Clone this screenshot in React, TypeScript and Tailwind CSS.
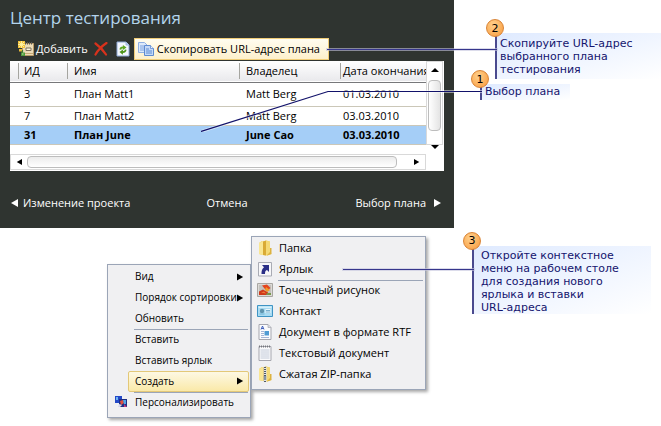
import type { ReactNode } from 'react';
import { clsx } from 'clsx';

const plans = [
  { id: 3, name: 'План Matt1', owner: 'Matt Berg', end: '01.03.2010' },
  { id: 7, name: 'План Matt2', owner: 'Matt Berg', end: '03.03.2010' },
  { id: 31, name: 'План June', owner: 'June Cao', end: '03.03.2010', selected: true },
];

type MenuEntry = {
  label: string;
  icon?: ReactNode;
  arrow?: boolean;
  separator?: boolean;
  active?: boolean;
};

function Triangle({ dir, className }: { dir: 'left' | 'right' | 'up' | 'down'; className?: string }) {
  const points = {
    left: '8,0 8,8 1,4',
    right: '0,0 0,8 7,4',
    up: '0,6 8,6 4,2',
    down: '0,2 8,2 4,6',
  }[dir];
  return (
    <svg viewBox="0 0 8 8" className={clsx('shrink-0 fill-current', className)} aria-hidden="true">
      <polygon points={points} />
    </svg>
  );
}

function AddIcon() {
  return (
    <svg viewBox="0 0 16 16" className="size-4 shrink-0" aria-hidden="true">
      <path d="M4.500 2.500H15.500V14.500H4.500z" fill="#ecdcb8" stroke="#b99a68" />
      <path d="M6 12.500h9" stroke="#c8ab77" />
      <path d="M7.500 1v2.500M9.500 1v2.500M11.500 1v2.500M13.500 1v2.500" stroke="#555" strokeWidth="1" />
      <path d="M8 7h5v2.500H8z" fill="#fdf6e2" stroke="#6e6250" strokeWidth=".9" />
      <path d="M0 0h7v7H0z" fill="#f3c33c" />
      <path d="M3.500 0v7M0 3.500h7M1 1l5 5M6 1L1 6" stroke="#fff3a8" strokeWidth=".9" />
      <path d="M1 8h3v2.500H1z" fill="#e9b93b" />
      <path d="M4.500 9v3.500" stroke="#3f7d31" strokeWidth="1.200" />
      <path d="M3 11.500h4v3.500H3z" fill="#4f9a3c" />
      <path d="M4 12.500h1.500v1H4z" fill="#bfe3a6" />
    </svg>
  );
}

function DeleteIcon() {
  return (
    <svg viewBox="0 0 14 14" className="size-3.5" aria-hidden="true">
      <path d="M1.500 1.500C5 4 9 8 12 12.500M12.500 1C8 4 4 8 1.500 12.500" fill="none" stroke="#d8321c" strokeWidth="2.200" strokeLinecap="round" />
    </svg>
  );
}

function RefreshIcon() {
  return (
    <svg viewBox="0 0 14 16" className="h-4 w-3.5" aria-hidden="true">
      <path d="M1 1h9l3 3v11H1z" fill="#f3f7fd" stroke="#8fa9d6" />
      <path d="M10 1v3h3" fill="#c6d6f0" stroke="#8fa9d6" strokeWidth=".8" />
      <path d="M3.500 8.500c0-2 1.400-3 3.400-3V4L10.500 6.600 6.900 9V7.400C5.800 7.400 5.300 7.700 5.300 8.800z" fill="#5da622" />
      <path d="M10.500 8.800c0 2-1.400 3.200-3.600 3.200v1.700L3.500 11l3.400-2.400v1.600c1.200 0 1.900-.5 1.900-1.600z" fill="#4c9418" />
    </svg>
  );
}

function CopyIcon() {
  return (
    <svg viewBox="0 0 16 14" className="h-3.5 w-4 shrink-0" aria-hidden="true">
      <path d="M.5 .5h6L9 3v7.500H.5z" fill="#dce9fb" stroke="#8fb0e3" />
      <path d="M2 4h4M2 6h5M2 8h5" stroke="#6f9bdc" strokeWidth=".9" />
      <path d="M6.500 3.500h6L15.500 6.500v7h-9z" fill="#c4d9f8" stroke="#5f8bd0" />
      <path d="M12.500 3.500v3h3" fill="#eef5ff" stroke="#5f8bd0" strokeWidth=".8" />
      <path d="M8 7h3M8 9h6M8 11h6" stroke="#5484cf" strokeWidth=".9" />
    </svg>
  );
}

function FolderIcon({ zip }: { zip?: boolean }) {
  return (
    <svg viewBox="0 0 16 16" className="size-4" aria-hidden="true">
      <path d="M2 3l3-2 1 .5h2L9 .5l4 1V12l1.500 2-4 1.500L6 15l-4-1z" fill="#f0cf5c" />
      <path d="M2 3l4-2v14l-4-1z" fill="#f9e694" />
      <path d="M6 1.500l3-1v15L6 15z" fill="#d9aa35" />
      <path d="M9 .5l4 1.200V12l-4 3.500z" fill="#f4d976" />
      <path d="M13 8h1.500v6L10 15.500 13 12z" fill="#dcb240" />
      {zip && (
        <>
          <path d="M6.500 1h3v14.500h-3z" fill="#e0e4e8" />
          <path d="M8 1v15" stroke="#4e5967" strokeWidth="2" strokeDasharray="1 1" />
          <path d="M6.800 10h2.400v4H6.800z" fill="#8795a5" />
        </>
      )}
    </svg>
  );
}

function ShortcutIcon() {
  return (
    <svg viewBox="0 0 16 16" className="size-4" aria-hidden="true">
      <path d="M1.500 1.500h13v13.500h-13z" fill="#f7f7f9" stroke="#a9abb4" />
      <path d="M5 4h7v7l-2-2c-1.500.5-2 1.700-2 4H4.500c-.2-3 .7-5 2.500-6.700z" fill="#2b2f87" />
    </svg>
  );
}

function BitmapIcon() {
  return (
    <svg viewBox="0 0 16 14" className="h-3.5 w-4" aria-hidden="true">
      <path d="M.5 .5h15v13H.5z" fill="#dcdad7" stroke="#a8a6a2" />
      <path d="M2 2h12v10H2z" fill="#c3c2be" />
      <path d="M5 2.500l5-1 3.500 3.500L10 8 7.500 5.500z" fill="#e4441e" />
      <path d="M9 4l4 3-3 2-2-2z" fill="#f39a26" />
      <path d="M2 8.500l4-2 5 3V12H2z" fill="#cf3a1a" />
      <path d="M4 9.500l3-1 2 2z" fill="#f07a3a" />
      <path d="M10 10h4v2h-5z" fill="#77984c" />
    </svg>
  );
}

function ContactIcon() {
  return (
    <svg viewBox="0 0 16 12" className="h-3 w-4" aria-hidden="true">
      <path d="M.5 .5h15v11H.5z" fill="#a9dbf2" stroke="#3f94c4" />
      <path d="M1.500 1.500h13v1.500h-13z" fill="#d6f0fb" />
      <circle cx="5" cy="6" r="2.200" fill="#5f94ae" />
      <path d="M2.500 9h5" stroke="#6fb2d3" />
      <path d="M8.500 4h5v4h-5z" fill="#eaf7fd" />
      <path d="M9 5.500h4M9 7h4" stroke="#5b9cc2" strokeWidth=".8" />
    </svg>
  );
}

function RtfIcon() {
  return (
    <svg viewBox="0 0 14 16" className="h-4 w-3.5" aria-hidden="true">
      <path d="M1 .5h9l3 3v12H1z" fill="#fbfbfd" stroke="#a6a7af" />
      <path d="M10 .5v3h3" fill="#d9dbe2" stroke="#a6a7af" strokeWidth=".7" />
      <path d="M3 5.500l1.500-3.500L6 5.500M3.500 4.500h2" fill="none" stroke="#3254b8" strokeWidth=".9" />
      <path d="M3 7.500h3M3 9.500h3M3 11.500h3M3 13.500h8" stroke="#8ea3cc" strokeWidth=".8" />
      <path d="M6.500 7h4.500v4.500H6.500z" fill="#4f9bd3" />
    </svg>
  );
}

function TextIcon() {
  return (
    <svg viewBox="0 0 14 16" className="h-4 w-3.5" aria-hidden="true">
      <path d="M1 1.500h12v14H1z" fill="#fafafc" stroke="#a6a7af" />
      <path d="M1 1.500h12" stroke="#77787e" strokeWidth="2" strokeDasharray="1 1" />
      <path d="M2.500 5h9M2.500 7h9M2.500 9h9M2.500 11h9M2.500 13h9" stroke="#bdc6d6" strokeWidth=".9" />
    </svg>
  );
}

function PersonalizeIcon() {
  return (
    <svg viewBox="0 0 14 12" className="h-3 w-3.5" aria-hidden="true">
      <path d="M1 0h7v7H1z" fill="#2348c8" />
      <path d="M2 1h2v3H2z" fill="#6fb4f0" />
      <path d="M5 3h8v8H5z" fill="#1d2e86" />
      <path d="M6 5l3-1 1 3-3 2z" fill="#e0503e" />
      <path d="M9 4h3v4h-2z" fill="#4fa4e6" />
      <path d="M5 8l3 1-2 2H4z" fill="#d8d8ea" />
      <path d="M10 8l3 3h-3z" fill="#c03a7a" />
    </svg>
  );
}

const contextMenu: MenuEntry[] = [
  { label: 'Вид', arrow: true },
  { label: 'Порядок сортировки', arrow: true },
  { label: 'Обновить' },
  { label: 'Вставить', separator: true },
  { label: 'Вставить ярлык' },
  { label: 'Создать', arrow: true, active: true },
  { label: 'Персонализировать', icon: <PersonalizeIcon />, separator: true },
];

const createMenu: MenuEntry[] = [
  { label: 'Папка', icon: <FolderIcon /> },
  { label: 'Ярлык', icon: <ShortcutIcon /> },
  { label: 'Точечный рисунок', icon: <BitmapIcon />, separator: true },
  { label: 'Контакт', icon: <ContactIcon /> },
  { label: 'Документ в формате RTF', icon: <RtfIcon /> },
  { label: 'Текстовый документ', icon: <TextIcon /> },
  { label: 'Сжатая ZIP-папка', icon: <FolderIcon zip /> },
];

function Menu({ items, className }: { items: MenuEntry[]; className?: string }) {
  return (
    <ul
      role="menu"
      className={clsx('shrink-0 border border-[#9ba5b7] bg-[#f0f0f2] pt-px pb-1 text-black shadow-[2px_2px_3px_rgba(0,0,0,0.35)]', className)}
    >
      {items.map((item) => (
        <li key={item.label} role="none">
          <button type="button" role="menuitem" className="flex h-[21px] w-full items-center text-left whitespace-nowrap">
            <span className="flex w-[26px] shrink-0 justify-center">{item.icon}</span>
            <span
              className={clsx(
                'flex h-full flex-1 items-center justify-between',
                item.active
                  ? '-ml-1.5 mr-px rounded-xs border border-[#e3c878] bg-linear-to-b from-[#fdf8e3] to-[#fae9a8] pr-1 pl-1.5'
                  : 'mr-0.5 border-t pr-1 pl-px',
                !item.active && (item.separator ? 'border-[#9ba5b7]' : 'border-transparent')
              )}
            >
              {item.label}
              {item.arrow && <Triangle dir="right" className="h-2 w-[7px]" />}
            </span>
          </button>
        </li>
      ))}
    </ul>
  );
}

function Callout({ step, children, className, line }: { step: number; children: ReactNode; className?: string; line: ReactNode }) {
  return (
    <div className={clsx('relative border-l-2 border-[#4a4a8f] bg-linear-to-br from-[#dfeaff] to-white font-["DejaVu_Sans",sans-serif] text-[11px] text-[#14146e]', className)}>
      {line}
      <span className="absolute -top-[14px] -left-[11px] flex size-[18px] items-center justify-center rounded-full border border-[#d98334] bg-radial-[at_40%_30%] from-[#ffd08c] to-[#f89a3c] text-[11px] leading-none text-black">
        {step}
      </span>
      {children}
    </div>
  );
}

function PlanTable() {
  return (
    <div className="bg-white text-black">
      <div className="flex">
        <div className="min-w-0 flex-1">
          <table className="w-full table-fixed border-collapse text-left whitespace-nowrap">
            <colgroup>
              <col className="w-[57px]" />
              <col className="w-[172px]" />
              <col className="w-[101px]" />
              <col />
            </colgroup>
            <thead>
              <tr className="h-[21px] border-b border-[#77787a] bg-linear-to-b from-white to-[#e9e9ec]">
                <th className="p-0 pl-2 font-normal"><div className="border-l border-[#a5a5a0] pl-[5px] leading-4">ИД</div></th>
                <th className="p-0 font-normal"><div className="border-l border-[#a5a5a0] pl-[6px] leading-4">Имя</div></th>
                <th className="p-0 font-normal"><div className="border-l border-[#a5a5a0] pl-[6px] leading-4">Владелец</div></th>
                <th className="p-0 font-normal"><div className="border-l border-[#a5a5a0] pl-[2px] leading-4">Дата окончания</div></th>
              </tr>
            </thead>
            <tbody>
              {plans.map((plan) => (
                <tr
                  key={plan.id}
                  className={clsx(
                    'h-[19px] border-b border-[#cbc7b8] leading-4 first:h-6',
                    plan.selected && 'bg-[#a5cef7] font-bold'
                  )}
                >
                  <td className="p-0 pl-[14px]">{plan.id}</td>
                  <td className="p-0 pl-[7px]">{plan.name}</td>
                  <td className="p-0 pl-[7px]">{plan.owner}</td>
                  <td className="p-0 pl-[3px]">{plan.end}</td>
                </tr>
              ))}
            </tbody>
          </table>
        </div>
        <div className="mr-px flex w-[17px] flex-col border border-[#d9d9d9] bg-white pb-px">
          <button type="button" aria-label="Вверх" className="flex h-4 items-center justify-center">
            <Triangle dir="up" className="size-2" />
          </button>
          <div className="mx-px mt-0.5 flex-1 rounded-sm border border-[#bdbdbd] bg-linear-to-r from-white to-[#e4e4e4]" />
          <button type="button" aria-label="Вниз" className="-mb-2 flex h-5 items-end justify-center">
            <Triangle dir="down" className="size-2" />
          </button>
        </div>
      </div>
      <div className="mt-[9px] mr-[18px] flex h-4 items-center border border-[#d9d9d9]">
        <button type="button" aria-label="Влево" className="flex w-4 justify-center">
          <Triangle dir="left" className="h-2 w-1.5" />
        </button>
        <div className="h-3 flex-1 rounded-sm border border-[#bdbdbd] bg-linear-to-b from-[#ececec] to-white" />
        <button type="button" aria-label="Вправо" className="ml-3 flex w-4 justify-center">
          <Triangle dir="right" className="h-2 w-1.5" />
        </button>
      </div>
      <div className="h-px" />
    </div>
  );
}

export default function App() {
  return (
    <main className="min-h-screen bg-white font-['Open_Sans','Noto_Sans',sans-serif] text-[11px]">
      <div className="flex items-start">
        <section className="min-w-0 flex-1 bg-[#2f3430] px-2.5 pb-[15px] text-white">
          <h1 className="pt-1.5 text-[17px] leading-6 text-[#b3d4ec]">Центр тестирования</h1>
          <div className="mt-2 mb-px flex h-[22px] items-center pl-2 whitespace-nowrap">
            <button type="button" className="flex items-center gap-0.5">
              <AddIcon />
              Добавить
            </button>
            <button type="button" aria-label="Удалить" className="ml-1.5"><DeleteIcon /></button>
            <button type="button" aria-label="Обновить" className="ml-2"><RefreshIcon /></button>
            <button type="button" className="ml-1 flex h-[22px] w-[195px] items-center gap-[3px] border border-[#f0cd78] bg-linear-to-b from-[#fffdf0] to-[#fdf0cc] pl-[3px] text-black">
              <CopyIcon />
              Скопировать URL-адрес плана
            </button>
          </div>
          <PlanTable />
          <div className="mt-[22px] grid grid-cols-3 items-center leading-5">
            <button type="button" className="flex items-center gap-[5px] whitespace-nowrap">
              <Triangle dir="left" className="size-2" />
              Изменение проекта
            </button>
            <button type="button">Отмена</button>
            <button type="button" className="flex items-center justify-end gap-2 pr-0.5 whitespace-nowrap">
              Выбор плана
              <Triangle dir="right" className="size-2" />
            </button>
          </div>
        </section>

        <aside className="flex w-[207px] shrink-0 flex-col gap-[5px] pt-[33px] pl-[26px]">
          <Callout
            step={2}
            className="ml-[15px] pt-1 pb-[3px] pl-[3px] leading-[13px]"
            line={<div className="absolute top-4 right-full h-px w-[170px] bg-[#36368c] outline outline-[#c4c4de]/60" />}
          >
            Скопируйте URL-адрес выбранного плана тестирования
          </Callout>
          <Callout
            step={1}
            className="w-[90px] pl-[3px] leading-4 whitespace-nowrap"
            line={
              <svg viewBox="0 0 281 42" className="absolute top-1.5 right-full h-[42px] w-[281px]" aria-hidden="true">
                <path d="M0 41.500L127 1.500H281" fill="none" stroke="#fff" strokeOpacity=".5" strokeWidth="3" />
                <path d="M0 41.500L127 1.500H281" fill="none" stroke="#12126a" strokeWidth="1.200" />
              </svg>
            }
          >
            Выбор плана
          </Callout>
        </aside>
      </div>

      <div className="flex items-start pl-[107px]">
        <Menu items={contextMenu} className="mt-9 w-36 text-[10px]" />
        <Menu items={createMenu} className="mt-2 w-[175px]" />
        <Callout
          step={3}
          className="mt-[18px] mr-2.5 ml-[46px] flex-1 pt-[3px] pr-6 pl-[7px] leading-[13px]"
          line={<div className="absolute top-[23px] right-full h-px w-[131px] bg-[#36368c] outline outline-[#c4c4de]/60" />}
        >
          Откройте контекстное меню на рабочем столе для создания нового ярлыка и вставки{' '}
          <span className="whitespace-nowrap">URL-адреса</span>
        </Callout>
      </div>
    </main>
  );
}
